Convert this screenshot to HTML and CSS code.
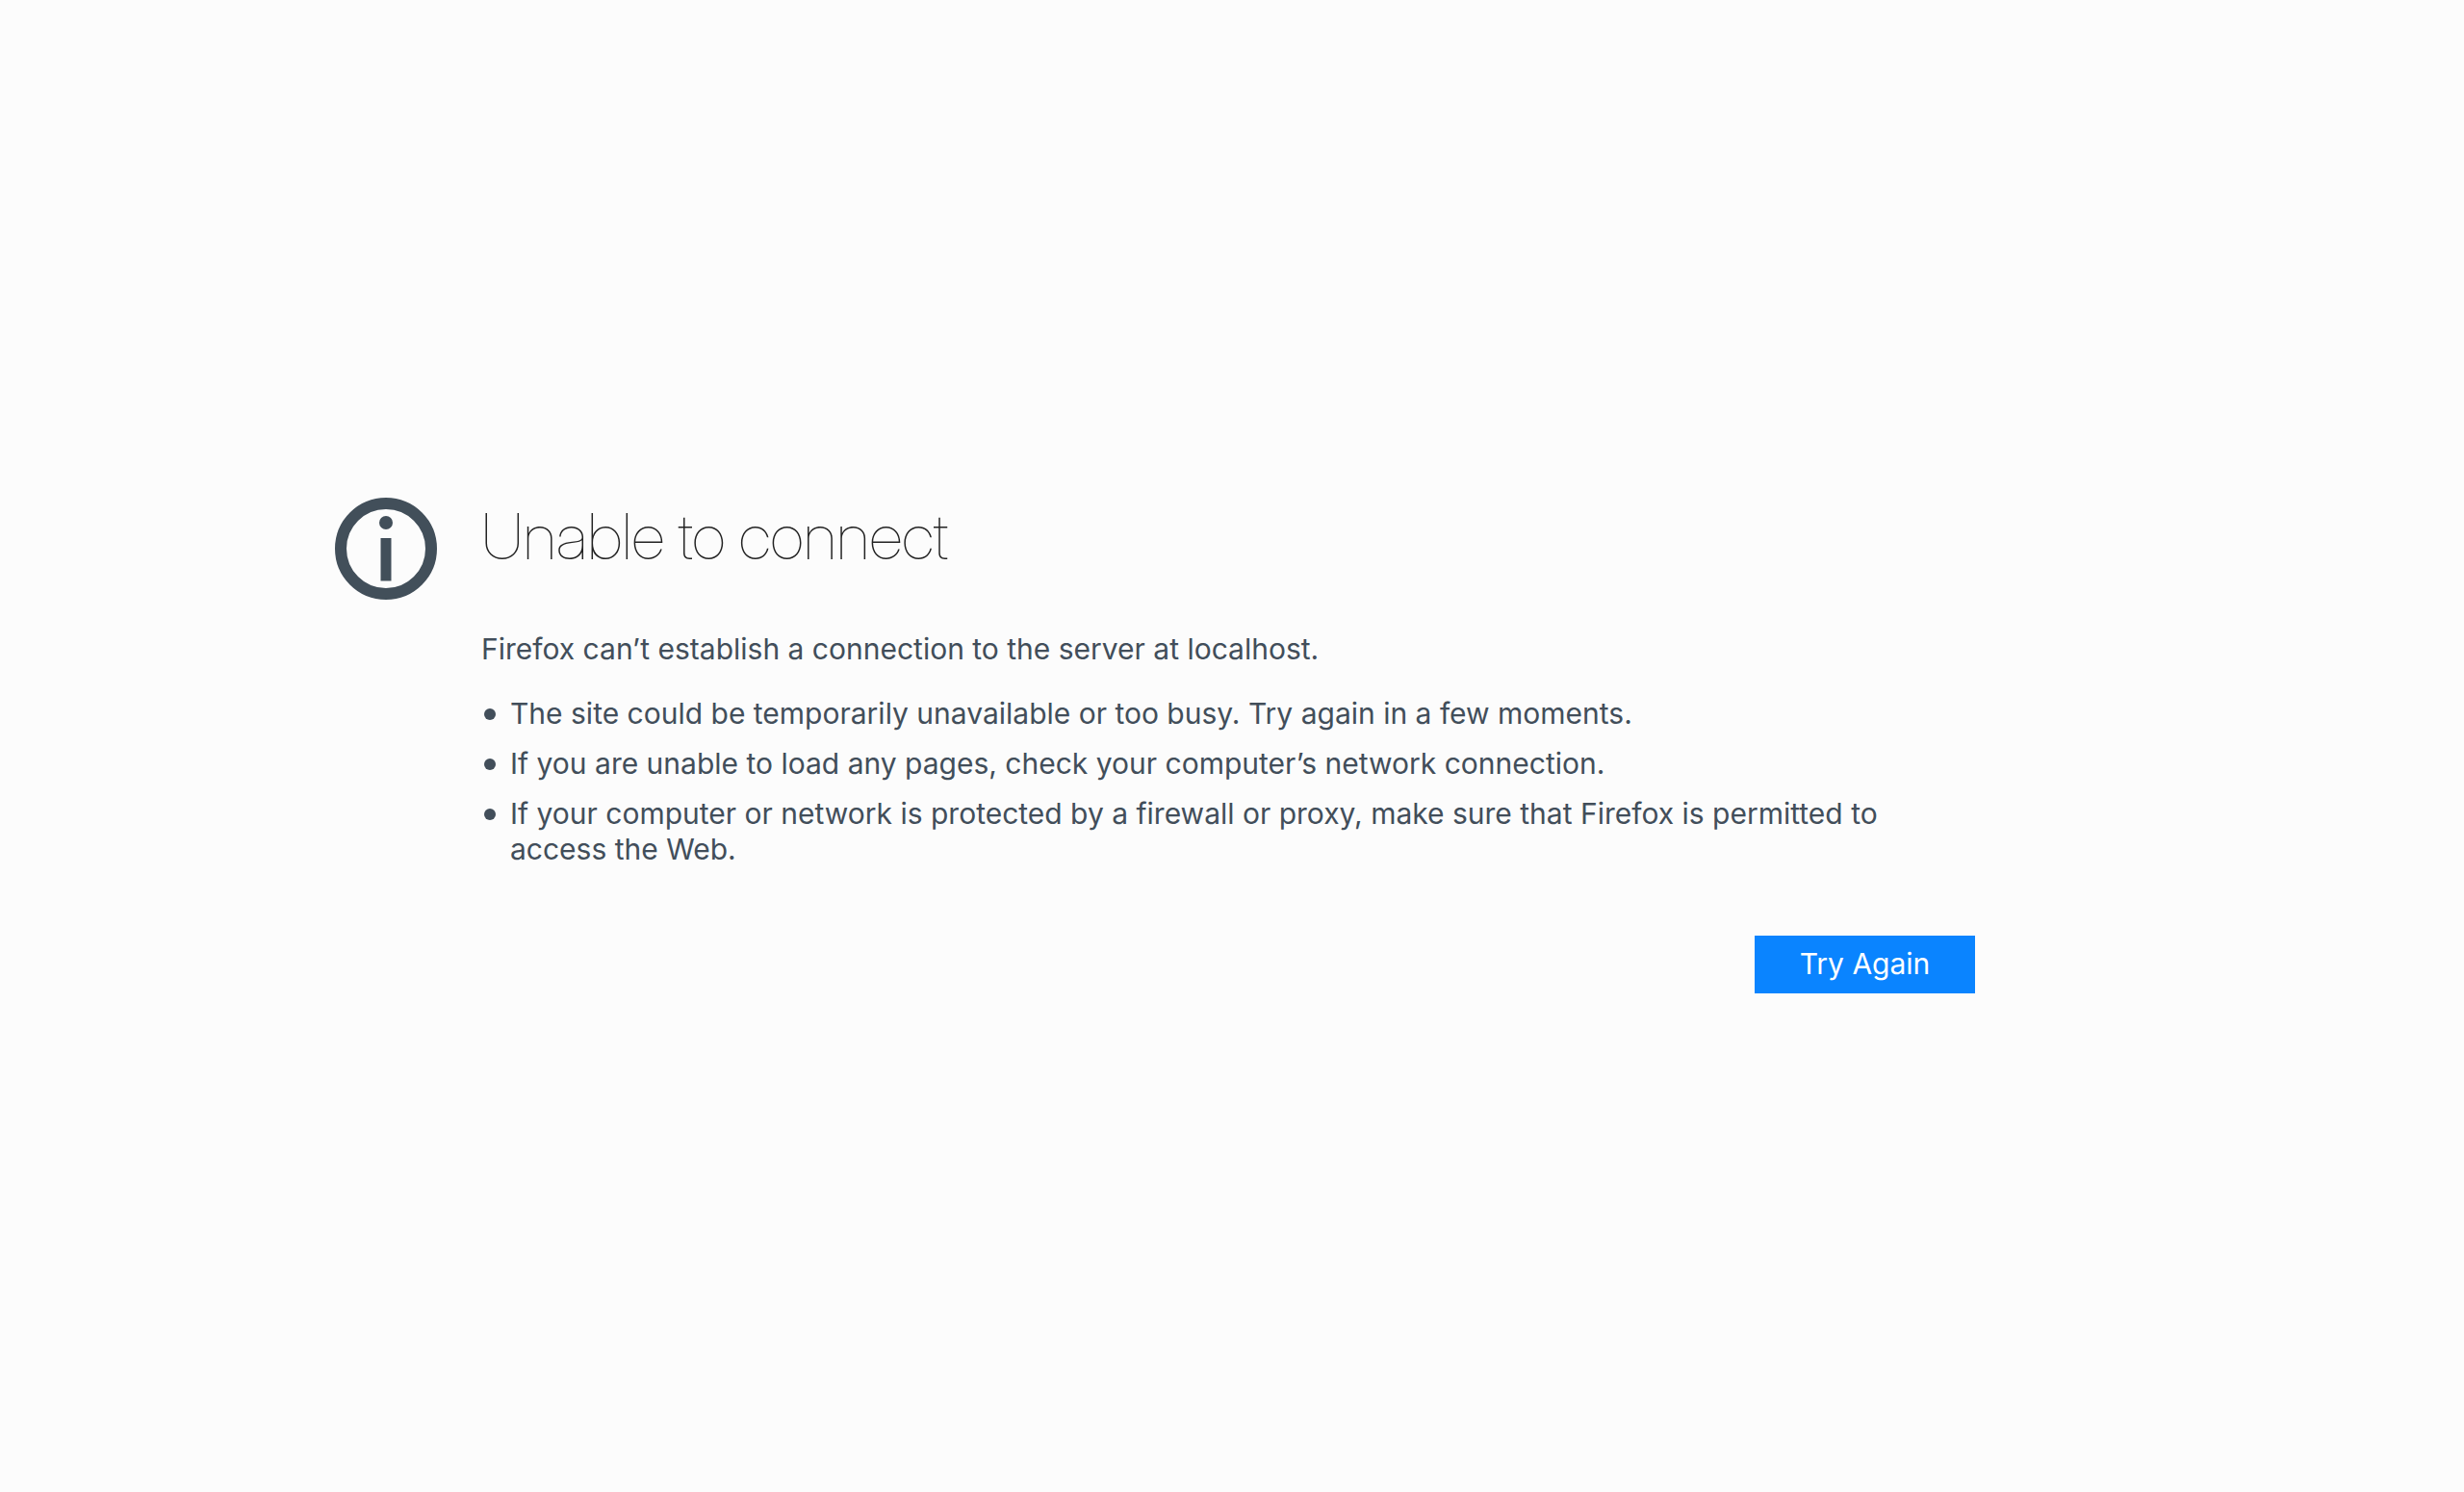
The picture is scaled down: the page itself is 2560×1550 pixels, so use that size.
FILE: index.html
```html
<!DOCTYPE html>
<html lang="en">
<head>
<meta charset="utf-8">
<title>Problem loading page</title>
<link rel="stylesheet" href="styles.css">
</head>
<body>
<main class="error">
  <svg class="error-icon" viewBox="0 0 106 106" aria-hidden="true">
    <circle cx="53" cy="53" r="47" fill="none" stroke="#424f5a" stroke-width="12"/>
    <circle cx="53" cy="26" r="7" fill="#424f5a"/>
    <path d="M47.500 42h11v44.500h-11z" fill="#424f5a"/>
  </svg>
  <div class="error-content">
    <h1 class="title">Unable to connect</h1>
    <p class="summary">Firefox can’t establish a connection to the server at localhost.</p>
    <ul class="hints">
      <li>The site could be temporarily unavailable or too busy. Try again in a few moments.</li>
      <li>If you are unable to load any pages, check your computer’s network connection.</li>
      <li>If your computer or network is protected by a firewall or proxy, make sure that Firefox is permitted to access the Web.</li>
    </ul>
    <div class="actions"><button class="primary" type="button">Try Again</button></div>
  </div>
</main>
</body>
</html>
```

FILE: styles.css
```css
body {
  box-sizing: border-box;
  margin: 0;
  min-height: 100vh;
  padding: 0 160px 2px 0;
  display: flex;
  align-items: center;
  background: #fcfcfc;
  color: #424e5a;
  font: 30px/37px Inter, "Liberation Sans", sans-serif;
}

.error {
  width: 100%;
  max-width: 1704px;
  margin: 0 auto;
  display: flex;
  align-items: flex-start;
  gap: 46px;
}

.error-icon {
  flex: none;
  width: 106px;
}

.error-content {
  flex: 1;
}

.title {
  margin: 0;
  font-family: "Inter Display", Inter, "Liberation Sans", sans-serif;
  font-size: 66px;
  line-height: 80px;
  font-weight: 100;
  font-variation-settings: "opsz" 32;
  color: #222;
}

.summary {
  margin: 59px 0 30px;
}

.hints {
  margin: 0;
  padding: 0 0 0 3px;
  list-style: none;
}

.hints li {
  display: flex;
  gap: 15px;
  margin-bottom: 15px;
}

.hints li::before {
  content: "";
  flex: none;
  width: 12px;
  height: 12px;
  margin-top: 13px;
  border-radius: 50%;
  background: currentColor;
}

.actions {
  display: flex;
  justify-content: flex-end;
  margin-top: 71px;
}

.primary {
  min-width: 229px;
  height: 60px;
  border: 0;
  background: #0a84ff;
  color: #fff;
  font: inherit;
}
```
